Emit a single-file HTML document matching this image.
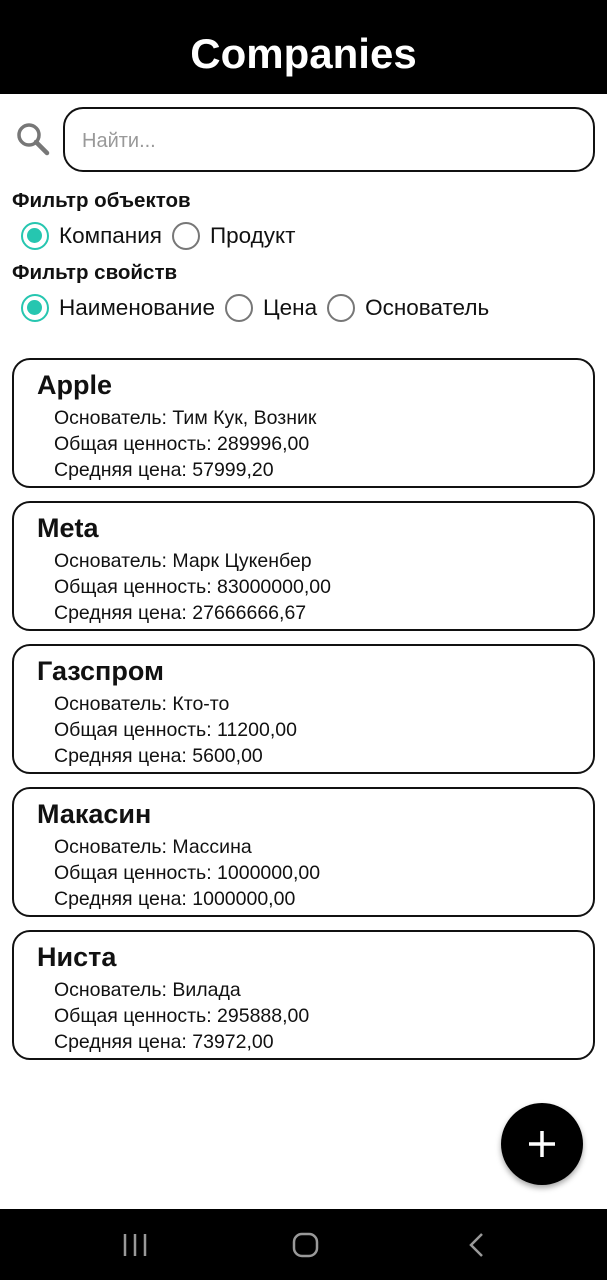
<!DOCTYPE html>
<html><head><meta charset="utf-8"><style>
*{margin:0;padding:0;box-sizing:border-box}
body{width:607px;height:1280px;background:#fff;font-family:"Liberation Sans","Noto Sans CJK SC",sans-serif;position:relative;overflow:hidden;color:#111}
.hdr{position:absolute;left:0;top:0;width:607px;height:94px;background:#000;color:#fff;font-weight:bold;font-size:42px;text-align:center;line-height:108px}
.search{position:absolute;left:63px;top:107px;width:532px;height:65px;border:2px solid #111;border-radius:20px;font-size:20px;color:#999;padding-left:17px;line-height:64px}
.lbl{position:absolute;left:12px;font-weight:bold;font-size:20.5px}
.row{position:absolute;left:21px;font-size:22.5px;display:flex;align-items:center}
.r{width:28px;height:28px;border-radius:50%;border:2.5px solid #777;margin-right:10px;display:inline-block;position:relative}
.r.on{border-color:#26c6b0}
.r.on:after{content:"";position:absolute;left:4px;top:4px;width:15px;height:15px;border-radius:50%;background:#26c6b0}
.sp{margin-right:10px}
.card{position:absolute;left:12px;width:583px;height:130px;border:2px solid #111;border-radius:18px}
.card h2{position:absolute;left:23px;top:10px;font-size:27px;font-weight:bold}
.card p{position:absolute;left:40px;font-size:19.5px}
.fab{position:absolute;left:501px;top:1103px;width:82px;height:82px;border-radius:50%;background:#000;box-shadow:0 3px 6px rgba(0,0,0,.35)}
.nav{position:absolute;left:0;top:1209px;width:607px;height:71px;background:#000}
</style></head><body>
<div class="hdr">Companies</div>
<svg style="position:absolute;left:15px;top:121px" width="36" height="36" viewBox="0 0 36 36"><circle cx="14" cy="14" r="10" fill="none" stroke="#777" stroke-width="3.5"/><line x1="21" y1="21" x2="32" y2="32" stroke="#777" stroke-width="4.5" stroke-linecap="round"/></svg>
<div class="search">Найти...</div>
<div class="lbl" style="top:189px">Фильтр объектов</div>
<div class="row" style="top:222px"><span class="r on"></span><span class="sp">Компания</span><span class="r"></span>Продукт</div>
<div class="lbl" style="top:261px">Фильтр свойств</div>
<div class="row" style="top:294px"><span class="r on"></span><span class="sp">Наименование</span><span class="r"></span><span class="sp">Цена</span><span class="r"></span>Основатель</div>

<div class="card" style="top:358px"><h2>Apple</h2><p style="top:47px">Основатель: Тим Кук, Возник</p><p style="top:73px">Общая ценность: 289996,00</p><p style="top:99px">Средняя цена: 57999,20</p></div>
<div class="card" style="top:501px"><h2>Meta</h2><p style="top:47px">Основатель: Марк Цукенбер</p><p style="top:73px">Общая ценность: 83000000,00</p><p style="top:99px">Средняя цена: 27666666,67</p></div>
<div class="card" style="top:644px"><h2>Газспром</h2><p style="top:47px">Основатель: Кто-то</p><p style="top:73px">Общая ценность: 11200,00</p><p style="top:99px">Средняя цена: 5600,00</p></div>
<div class="card" style="top:787px"><h2>Макасин</h2><p style="top:47px">Основатель: Массина</p><p style="top:73px">Общая ценность: 1000000,00</p><p style="top:99px">Средняя цена: 1000000,00</p></div>
<div class="card" style="top:930px"><h2>Ниста</h2><p style="top:47px">Основатель: Вилада</p><p style="top:73px">Общая ценность: 295888,00</p><p style="top:99px">Средняя цена: 73972,00</p></div>

<div class="fab"><svg width="82" height="82" viewBox="0 0 82 82"><path d="M41 28V54M28 41H54" stroke="#fff" stroke-width="3.5"/></svg></div>
<div class="nav"><svg width="607" height="71" viewBox="0 0 607 71"><g stroke="#999" stroke-width="2.5" fill="none"><path d="M125 25V47M135 25V47M145 25V47"/><rect x="294" y="25" width="23" height="22" rx="8"/><path d="M482 25L471 36L482 47"/></g></svg></div>
</body></html>
